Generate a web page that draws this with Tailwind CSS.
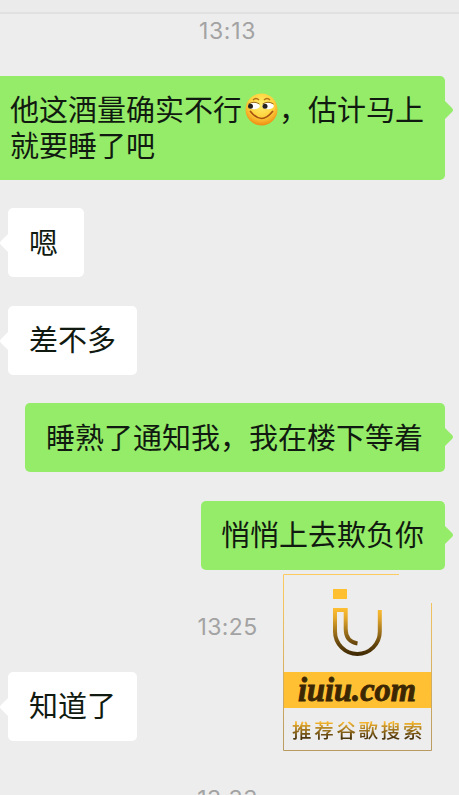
<!DOCTYPE html>
<html lang="zh-CN">
<head>
<meta charset="utf-8">
<title>聊天</title>
<script src="https://cdn.jsdelivr.net/npm/@tailwindcss/browser@4"></script>
</head>
<body class="bg-[#ededed]">
<main class="relative flex h-[795px] w-[459px] flex-col overflow-hidden bg-[#ededed] font-['Noto_Sans_CJK_SC',sans-serif] text-[29px] leading-[36px] text-[#111a10]">
  <header class="h-[14px] shrink-0 border-b-2 border-[#e1e1e1] bg-[#ebebeb]"></header>
  <time class="mt-[4px] h-[26px] shrink-0 pr-[4px] text-center font-[Inter,sans-serif] text-[23px] leading-[26px] tracking-[0.7px] text-[#a3a3a3]">13:13</time>

  <section class="mt-[32px] flex shrink-0 flex-col gap-[28.6px]">
    <div class="relative mr-[14px] -mb-[0.6px] h-[104px] rounded-r-[5px] bg-[#95ec69] pt-[14px] pl-[10px] whitespace-nowrap">
      <p class="flex h-[36px] items-center">他这酒量确实不行<svg class="mt-[3px] mr-[1px] ml-[3px] h-[33px] w-[33px]" viewBox="0 0 33 33">
        <defs><radialGradient id="face" cx=".5" cy=".35" r=".65"><stop offset="0" stop-color="#fff06e"/><stop offset=".6" stop-color="#ffd23c"/><stop offset="1" stop-color="#ee8b13"/></radialGradient></defs>
        <circle cx="16.500" cy="16.500" r="16" fill="url(#face)"/>
        <path d="M8 7q3-3 6 0M19 7q3-3 6 0" fill="none" stroke="#b06c17" stroke-width="1.300"/>
        <ellipse cx="9" cy="13" rx="5.800" ry="3.300" fill="#fff"/><ellipse cx="23" cy="13" rx="5.800" ry="3.300" fill="#fff"/>
        <path d="M3.500 11q5.500-3.500 11 0M17.500 11q5.500-3.500 11 0" fill="none" stroke="#7c4a12" stroke-width=".8"/>
        <circle cx="5.500" cy="13.300" r="2.500" fill="#24211e"/><circle cx="20" cy="13.300" r="2.500" fill="#24211e"/>
        <path d="M5.500 18.500q11 14 22 0" fill="none" stroke="#a65312" stroke-width="1.700" stroke-linecap="round"/>
      </svg>，估计马上</p>
      <p>就要睡了吧</p>
      <svg class="absolute top-[24px] -right-[9px] h-[20px] w-[10px]" viewBox="0 0 10 20"><path d="M0 0L8 8Q10 10 8 12L0 20Z" fill="#95ec69"/></svg>
    </div>

    <div class="relative ml-[8px] flex h-[69px] w-[76px] items-center rounded-[5px] bg-white pb-[4px] pl-[21px]">嗯
      <svg class="absolute top-[25px] -left-[9px] h-[20px] w-[10px]" viewBox="0 0 10 20"><path d="M10 0L2 8Q0 10 2 12L10 20Z" fill="#fff"/></svg>
    </div>

    <div class="relative ml-[8px] flex h-[69px] w-[129px] items-center rounded-[5px] bg-white pb-[4px] pl-[21px]">差不多
      <svg class="absolute top-[25px] -left-[9px] h-[20px] w-[10px]" viewBox="0 0 10 20"><path d="M10 0L2 8Q0 10 2 12L10 20Z" fill="#fff"/></svg>
    </div>

    <div class="relative mr-[14px] flex h-[69px] w-[420px] items-center self-end rounded-[5px] bg-[#95ec69] pb-[4px] pl-[21px] whitespace-nowrap">睡熟了通知我，我在楼下等着
      <svg class="absolute top-[24px] -right-[9px] h-[20px] w-[10px]" viewBox="0 0 10 20"><path d="M0 0L8 8Q10 10 8 12L0 20Z" fill="#95ec69"/></svg>
    </div>

    <div class="relative mr-[14px] flex h-[69px] w-[244px] items-center self-end rounded-[5px] bg-[#95ec69] pb-[4px] pl-[20px] whitespace-nowrap">悄悄上去欺负你
      <svg class="absolute top-[24px] -right-[9px] h-[20px] w-[10px]" viewBox="0 0 10 20"><path d="M0 0L8 8Q10 10 8 12L0 20Z" fill="#95ec69"/></svg>
    </div>
  </section>

  <time class="mt-[44.200px] h-[26px] shrink-0 pr-[4px] text-center font-[Inter,sans-serif] text-[23px] leading-[26px] tracking-[0.4px] text-[#a3a3a3]">13:25</time>

  <div class="relative mt-[32px] ml-[8px] flex h-[69px] w-[129px] shrink-0 items-center rounded-[5px] bg-white pb-[4px] pl-[21px]">知道了
    <svg class="absolute top-[25px] -left-[9px] h-[20px] w-[10px]" viewBox="0 0 10 20"><path d="M10 0L2 8Q0 10 2 12L10 20Z" fill="#fff"/></svg>
  </div>

  <time class="mt-[45px] h-[26px] shrink-0 pr-[4px] text-center font-[Inter,sans-serif] text-[23px] leading-[26px] tracking-[0.4px] text-[#a3a3a3]">13:33</time>

  <aside class="absolute top-[574px] left-[283px] flex h-[177px] w-[149px] flex-col">
    <svg class="absolute inset-0 h-[177px] w-[149px]" viewBox="0 0 149 177" fill="none">
      <defs><linearGradient id="edge" gradientUnits="userSpaceOnUse" x1="0" y1="0" x2="0" y2="177"><stop offset="0" stop-color="#fdcb60"/><stop offset="1" stop-color="#b89b62"/></linearGradient></defs>
      <path d="M116 .5H.5V176.500H148.500V29" stroke="url(#edge)"/>
    </svg>
    <svg class="h-[98px] w-[149px] shrink-0" viewBox="0 0 149 98" fill="none">
      <defs><linearGradient id="gold" gradientUnits="userSpaceOnUse" x1="0" y1="34" x2="0" y2="82"><stop offset="0" stop-color="#ffbf32"/><stop offset=".2" stop-color="#e5a92c"/><stop offset=".75" stop-color="#65450d"/><stop offset="1" stop-color="#3c2704"/></linearGradient></defs>
      <path d="M50 15h14v10H50z" fill="#ffbf32"/>
      <path d="M96.800 36V57.500A22.400 22.400 0 0 1 52 57.500V36H62.700V55Q62.700 67.500 74.500 69.500" stroke="url(#gold)" stroke-width="4"/>
    </svg>
    <div class="flex h-[36px] shrink-0 items-center justify-center bg-[#ffc034]">
      <svg class="h-[36px] w-[149px]" viewBox="0 0 149 36"><text x="15" y="29" textLength="118" lengthAdjust="spacingAndGlyphs" font-family="Liberation Serif, serif" font-size="33" font-weight="700" font-style="italic" fill="#3c2704" stroke="#3c2704" stroke-width=".9">iuiu.com</text></svg>
    </div>
    <p class="mt-[8px] ml-[9px] bg-linear-to-b from-[#f5b62e] from-25% to-[#4d350b] to-80% bg-clip-text text-[19.500px] leading-[27px] font-medium tracking-[2.700px] whitespace-nowrap text-transparent">推荐谷歌搜索</p>
  </aside>
</main>
</body>
</html>
